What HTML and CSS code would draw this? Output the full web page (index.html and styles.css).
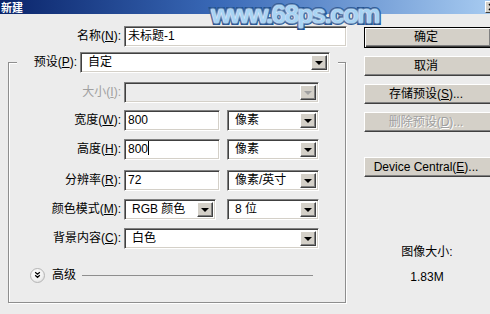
FILE: index.html
```html
<!DOCTYPE html>
<html lang="zh-CN">
<head>
<meta charset="utf-8">
<title>新建</title>
<link rel="stylesheet" href="styles.css">
</head>
<body>
<div class="window">
  <div class="titlebar">
    <span class="title">新建</span>
    <span class="close"><svg width="8" height="8" viewBox="0 0 8 8"><path d="M1 1 L7 7 M7 1 L1 7" stroke="#000" stroke-width="1.5"/></svg></span>
  </div>
  <div class="content">
    <div class="form">
      <div class="name-row">
        <span class="label name-label">名称(<u>N</u>):</span>
        <div class="field name-field">未标题-1</div>
      </div>
      <fieldset class="group">
        <legend class="preset">
          <span class="label preset-label">预设(<u>P</u>):</span>
          <div class="select preset-select"><span class="text">自定</span><span class="arrow"><i></i></span></div>
        </legend>
        <div class="row row-size">
          <span class="label disabled">大小(<u>I</u>):</span>
          <div class="select size-select is-disabled"><span class="text"></span><span class="arrow"><i></i></span></div>
        </div>
        <div class="row row-width">
          <span class="label">宽度(<u>W</u>):</span>
          <div class="field num">800</div>
          <div class="select unit"><span class="text">像素</span><span class="arrow"><i></i></span></div>
        </div>
        <div class="row row-height">
          <span class="label">高度(<u>H</u>):</span>
          <div class="field num">800<span class="caret"></span></div>
          <div class="select unit"><span class="text">像素</span><span class="arrow"><i></i></span></div>
        </div>
        <div class="row row-res">
          <span class="label">分辨率(<u>R</u>):</span>
          <div class="field num">72</div>
          <div class="select unit"><span class="text">像素/英寸</span><span class="arrow"><i></i></span></div>
        </div>
        <div class="row row-mode">
          <span class="label">颜色模式(<u>M</u>):</span>
          <div class="select mode"><span class="text">RGB 颜色</span><span class="arrow"><i></i></span></div>
          <div class="select unit"><span class="text">8 位</span><span class="arrow"><i></i></span></div>
        </div>
        <div class="row row-bg">
          <span class="label">背景内容(<u>C</u>):</span>
          <div class="select bg-select"><span class="text">白色</span><span class="arrow"><i></i></span></div>
        </div>
        <div class="advanced">
          <span class="adv-icon"><svg width="14" height="14" viewBox="0 0 14 14"><path d="M4.5 4 L7 6.2 L9.5 4 M4.5 7.3 L7 9.5 L9.5 7.3" fill="none" stroke="#000" stroke-width="1.3"/></svg></span>
          <span class="adv-text">高级</span>
          <span class="adv-line"></span>
        </div>
      </fieldset>
    </div>
    <div class="side">
      <div class="btn default">确定</div>
      <div class="btn">取消</div>
      <div class="btn">存储预设(<u>S</u>)...</div>
      <div class="btn disabled">删除预设(<u>D</u>)...</div>
      <div class="btn device">Device Central(<u>E</u>)...</div>
      <div class="info">
        <div class="info-label">图像大小:</div>
        <div class="info-value">1.83M</div>
      </div>
    </div>
  </div>
  <div class="watermark">www.68ps.com</div>
</div>
</body>
</html>
```

FILE: styles.css
```css
* { box-sizing: border-box; }
html, body { margin: 0; padding: 0; }
body {
  width: 490px;
  height: 314px;
  overflow: hidden;
  background: #ececec;
  font-family: "Liberation Sans", "Noto Sans CJK SC", sans-serif;
  font-size: 12px;
  color: #000;
}
u { text-decoration: underline; text-underline-offset: 1px; }

.window { position: relative; width: 490px; height: 314px; overflow: hidden; }

.titlebar {
  height: 14px;
  display: flex;
  align-items: center;
  justify-content: space-between;
  background: linear-gradient(to right, #0a246a 0%, #3a6ab8 45%, #a6caf0 100%);
}
.title {
  color: #fff;
  font-weight: bold;
  font-size: 11px;
  line-height: 14px;
  height: 14px;
  padding-left: 1px;
  font-family: "Noto Sans CJK SC", sans-serif;
}
.close {
  width: 16px;
  height: 12px;
  margin-right: -11px;
  background: #d4d0c8;
  border-top: 1px solid #fff;
  border-left: 1px solid #fff;
  border-bottom: 1px solid #404040;
  display: flex;
  align-items: center;
  padding-left: 2px;
}
.close svg { display: block; }

.content { display: flex; }
.form { width: 364px; flex: none; }

.label { text-align: right; white-space: nowrap; line-height: 21px; }
.label.disabled { color: #a0a0a0; }

.name-row { display: flex; margin-top: 12px; height: 20px; }
.name-label { width: 121px; line-height: 20px; }
.name-field { margin-left: 3px; width: 223px; height: 20px; line-height: 18px; padding-left: 3px; }

.field {
  height: 21px;
  background: #fff;
  border-top: 1px solid #808080;
  border-left: 1px solid #808080;
  border-bottom: 1px solid #fff;
  border-right: 1px solid #fff;
  box-shadow: inset 1px 1px 0 #404040, inset -1px -1px 0 #d4d0c8;
  padding: 0 3px;
  line-height: 19px;
  white-space: nowrap;
}
.caret { display: inline-block; width: 1px; height: 14px; background: #000; vertical-align: -2px; }

.select {
  display: flex;
  height: 21px;
  background: #fff;
  border-top: 1px solid #808080;
  border-left: 1px solid #808080;
  border-bottom: 1px solid #fff;
  border-right: 1px solid #fff;
  box-shadow: inset 1px 1px 0 #404040, inset -1px -1px 0 #d4d0c8;
  padding: 2px;
}
.select .text { flex: 1; padding-left: 5px; line-height: 15px; white-space: nowrap; }
.select .arrow {
  width: 16px;
  height: 15px;
  background: #d4d0c8;
  border-top: 1px solid #fff;
  border-left: 1px solid #fff;
  border-right: 1px solid #404040;
  border-bottom: 1px solid #404040;
  box-shadow: inset -1px -1px 0 #808080;
  display: flex;
  align-items: center;
  justify-content: center;
}
.select .arrow i {
  width: 0;
  height: 0;
  border-left: 4px solid transparent;
  border-right: 4px solid transparent;
  border-top: 4px solid #000;
}
.select.is-disabled { background: #ececec; }
.select.is-disabled .arrow i { border-top-color: #a0a0a0; }

.group {
  margin: 6px 0 0 8px;
  padding: 0;
  width: 338px;
  border: 1px solid #8e8e8e;
  box-shadow: 1px 1px 0 #fff, inset 1px 1px 0 #fff;
  min-inline-size: 0;
}
.preset {
  display: flex;
  margin-left: 8px;
  padding: 0 8px 0 0;
  background: #ececec;
}
.preset-label { width: 60px; }
.preset-select { margin-left: 3px; width: 250px; }

.row { display: flex; }
.row .label { width: 112px; }
.row .label + * { margin-left: 3px; }
.row-size { margin-top: 9px; }
.row-width { margin-top: 7px; }
.row-height { margin-top: 8px; }
.row-res { margin-top: 10px; }
.row-mode { margin-top: 8px; }
.row-bg { margin-top: 8px; }
.size-select, .bg-select { width: 195px; }
.num { width: 96px; }
.unit { width: 92px; margin-left: 7px; }
.mode { width: 92px; }
.mode + .unit { margin-left: 11px; }

.advanced {
  display: flex;
  align-items: center;
  margin-top: 18px;
  margin-bottom: 19px;
  padding-left: 21px;
  height: 16px;
}
.adv-icon {
  width: 15px;
  height: 15px;
  border-radius: 50%;
  background: radial-gradient(circle at 40% 35%, #ffffff 0%, #f2f2f2 55%, #cfcfcf 100%);
  border: 1px solid #b5b5b5;
  display: flex;
  align-items: center;
  justify-content: center;
}
.adv-icon svg { display: block; }
.adv-text { margin-left: 7px; line-height: 16px; }
.adv-line { margin-left: 6px; width: 231px; height: 1px; background: #8e8e8e; }

.side { flex: none; width: 130px; padding-top: 13px; }
.btn {
  width: 128px;
  height: 20px;
  background: #d4d0c8;
  border-top: 1px solid #fff;
  border-left: 1px solid #fff;
  border-bottom: 1px solid #404040;
  border-right: 1px solid #404040;
  box-shadow: inset -1px -1px 0 #808080;
  text-align: center;
  line-height: 18px;
  white-space: nowrap;
  padding-right: 4px;
  margin-top: 8px;
}
.btn.default {
  margin-top: 0;
  height: 21px;
  border: 1px solid #000;
  box-shadow: inset 1px 1px 0 #fff, inset -1px -1px 0 #404040, inset -2px -2px 0 #808080;
}
.btn.disabled { color: #a0a0a0; text-shadow: 1px 1px 0 #fff; }
.btn.device { margin-top: 25px; }
.info { padding-right: 4px; text-align: center; margin-top: 68px; }
.info-label { line-height: 14px; }
.info-value { line-height: 14px; margin-top: 11px; }

.watermark {
  position: absolute;
  left: 211px;
  top: 3px;
  font-family: "Liberation Sans", sans-serif;
  font-weight: bold;
  font-size: 26px;
  line-height: 22px;
  letter-spacing: -1.6px;
  color: #a8d4f4;
  -webkit-text-stroke: 4px #1d4f8f;
  paint-order: stroke fill;
  text-shadow: 0 0 2px #fff, 0 0 2px #fff;
  white-space: nowrap;
  pointer-events: none;
}
```
